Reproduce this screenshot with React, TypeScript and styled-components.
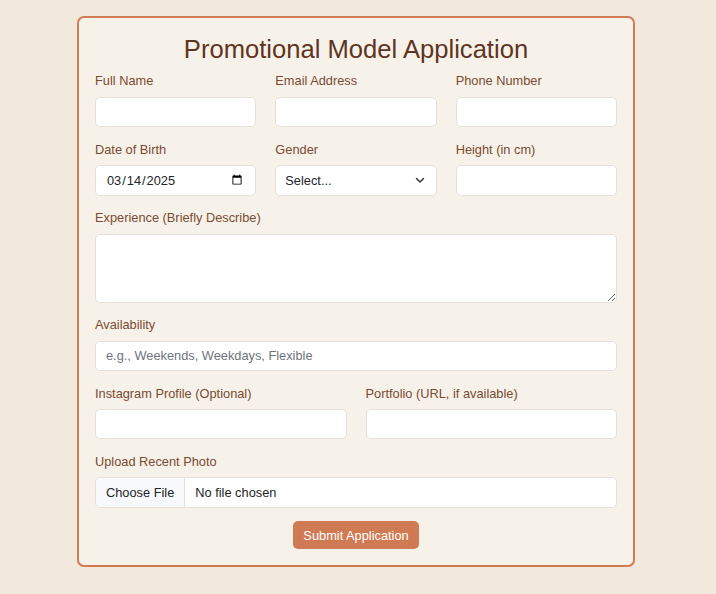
import React, { FC } from 'react';
import styled, { createGlobalStyle } from 'styled-components';

const GlobalStyle = createGlobalStyle`
  html, body {
    margin: 0;
    padding: 0;
    background: #f2e8db;
  }
  body {
    font-family: "Liberation Sans", Arial, sans-serif;
  }
  * {
    box-sizing: border-box;
  }
`;

const Page = styled.div`
  min-height: 594px;
  padding: 16px 4px 0 0;
  display: flex;
  justify-content: center;
  align-items: flex-start;
`;

const Card = styled.form`
  width: 558px;
  background: #f7f2e9;
  border: 2px solid #d27b53;
  border-radius: 7px;
  padding: 16px;
  display: flex;
  flex-direction: column;
`;

const Title = styled.h2`
  margin: 0 0 7.4px;
  font-size: 25.6px;
  line-height: 30px;
  font-weight: 400;
  color: #5f3423;
  text-align: center;
`;

const Row = styled.div<{ $cols: number }>`
  display: grid;
  grid-template-columns: repeat(${(p) => p.$cols}, 1fr);
  column-gap: 19px;
`;

const Group = styled.div`
  display: flex;
  flex-direction: column;
  margin-bottom: 12.4px;
`;

const Label = styled.label`
  font-size: 12.8px;
  line-height: 19.2px;
  color: #7a4a33;
  margin-bottom: 6.4px;
`;

const Input = styled.input`
  height: 30.4px;
  width: 100%;
  padding: 0 10px;
  font-family: "Liberation Sans", Arial, sans-serif;
  font-size: 12.8px;
  color: #212529;
  background: #fff;
  border: 1px solid #e6e0d8;
  border-radius: 5px;
  outline: none;

  &::placeholder {
    color: #6c757d;
  }

  &[type='file'] {
    padding: 0;
    line-height: 28px;
    color: #212529;
  }

  &::file-selector-button {
    height: 28.4px;
    margin: 0 10px 0 0;
    padding: 0 10px;
    border: none;
    border-right: 1px solid #e6e0d8;
    background: #f8f9fa;
    color: #212529;
    font-family: "Liberation Sans", Arial, sans-serif;
    font-size: 12.8px;
  }
`;

const TextArea = styled.textarea`
  height: 69px;
  width: 100%;
  padding: 6px 10px;
  font-family: "Liberation Sans", Arial, sans-serif;
  font-size: 12.8px;
  background: #fff;
  border: 1px solid #e6e0d8;
  border-radius: 5px;
  outline: none;
  resize: vertical;
`;

const SelectWrap = styled.div`
  position: relative;
`;

const Select = styled.select`
  height: 30.4px;
  width: 100%;
  padding: 0 30px 0 9px;
  font-family: "Liberation Sans", Arial, sans-serif;
  font-size: 12.8px;
  color: #212529;
  background: #fff;
  border: 1px solid #e6e0d8;
  border-radius: 5px;
  appearance: none;
  outline: none;
`;

const Chevron = styled.svg`
  position: absolute;
  right: 12px;
  top: 11px;
  pointer-events: none;
`;

const Actions = styled.div`
  display: flex;
  justify-content: center;
  padding-top: 1px;
`;

const SubmitButton = styled.button`
  height: 28px;
  padding: 0 10px;
  background: #cf7a53;
  color: #fff;
  border: none;
  border-radius: 5px;
  font-family: "Liberation Sans", Arial, sans-serif;
  font-size: 12.8px;
  cursor: pointer;
`;

const App: FC = () => {
  return (
    <Page>
      <GlobalStyle />
      <Card onSubmit={(e) => e.preventDefault()}>
        <Title>Promotional Model Application</Title>
        <Row $cols={3}>
          <Group>
            <Label>Full Name</Label>
            <Input type="text" />
          </Group>
          <Group>
            <Label>Email Address</Label>
            <Input type="email" />
          </Group>
          <Group>
            <Label>Phone Number</Label>
            <Input type="tel" />
          </Group>
        </Row>
        <Row $cols={3}>
          <Group>
            <Label>Date of Birth</Label>
            <Input type="date" defaultValue="2025-03-14" />
          </Group>
          <Group>
            <Label>Gender</Label>
            <SelectWrap>
              <Select defaultValue="">
                <option value="">Select...</option>
                <option value="female">Female</option>
                <option value="male">Male</option>
                <option value="other">Other</option>
              </Select>
              <Chevron width="10" height="8" viewBox="0 0 10 8">
                <path d="M1.5 2.5 L5 6 L8.5 2.5" fill="none" stroke="#343a40" strokeWidth="1.5" strokeLinecap="round" strokeLinejoin="round" />
              </Chevron>
            </SelectWrap>
          </Group>
          <Group>
            <Label>Height (in cm)</Label>
            <Input type="number" />
          </Group>
        </Row>
        <Group>
          <Label>Experience (Briefly Describe)</Label>
          <TextArea />
        </Group>
        <Group>
          <Label>Availability</Label>
          <Input type="text" placeholder="e.g., Weekends, Weekdays, Flexible" />
        </Group>
        <Row $cols={2}>
          <Group>
            <Label>Instagram Profile (Optional)</Label>
            <Input type="text" />
          </Group>
          <Group>
            <Label>Portfolio (URL, if available)</Label>
            <Input type="url" />
          </Group>
        </Row>
        <Group>
          <Label>Upload Recent Photo</Label>
          <Input type="file" />
        </Group>
        <Actions>
          <SubmitButton type="submit">Submit Application</SubmitButton>
        </Actions>
      </Card>
    </Page>
  );
};

export default App;
